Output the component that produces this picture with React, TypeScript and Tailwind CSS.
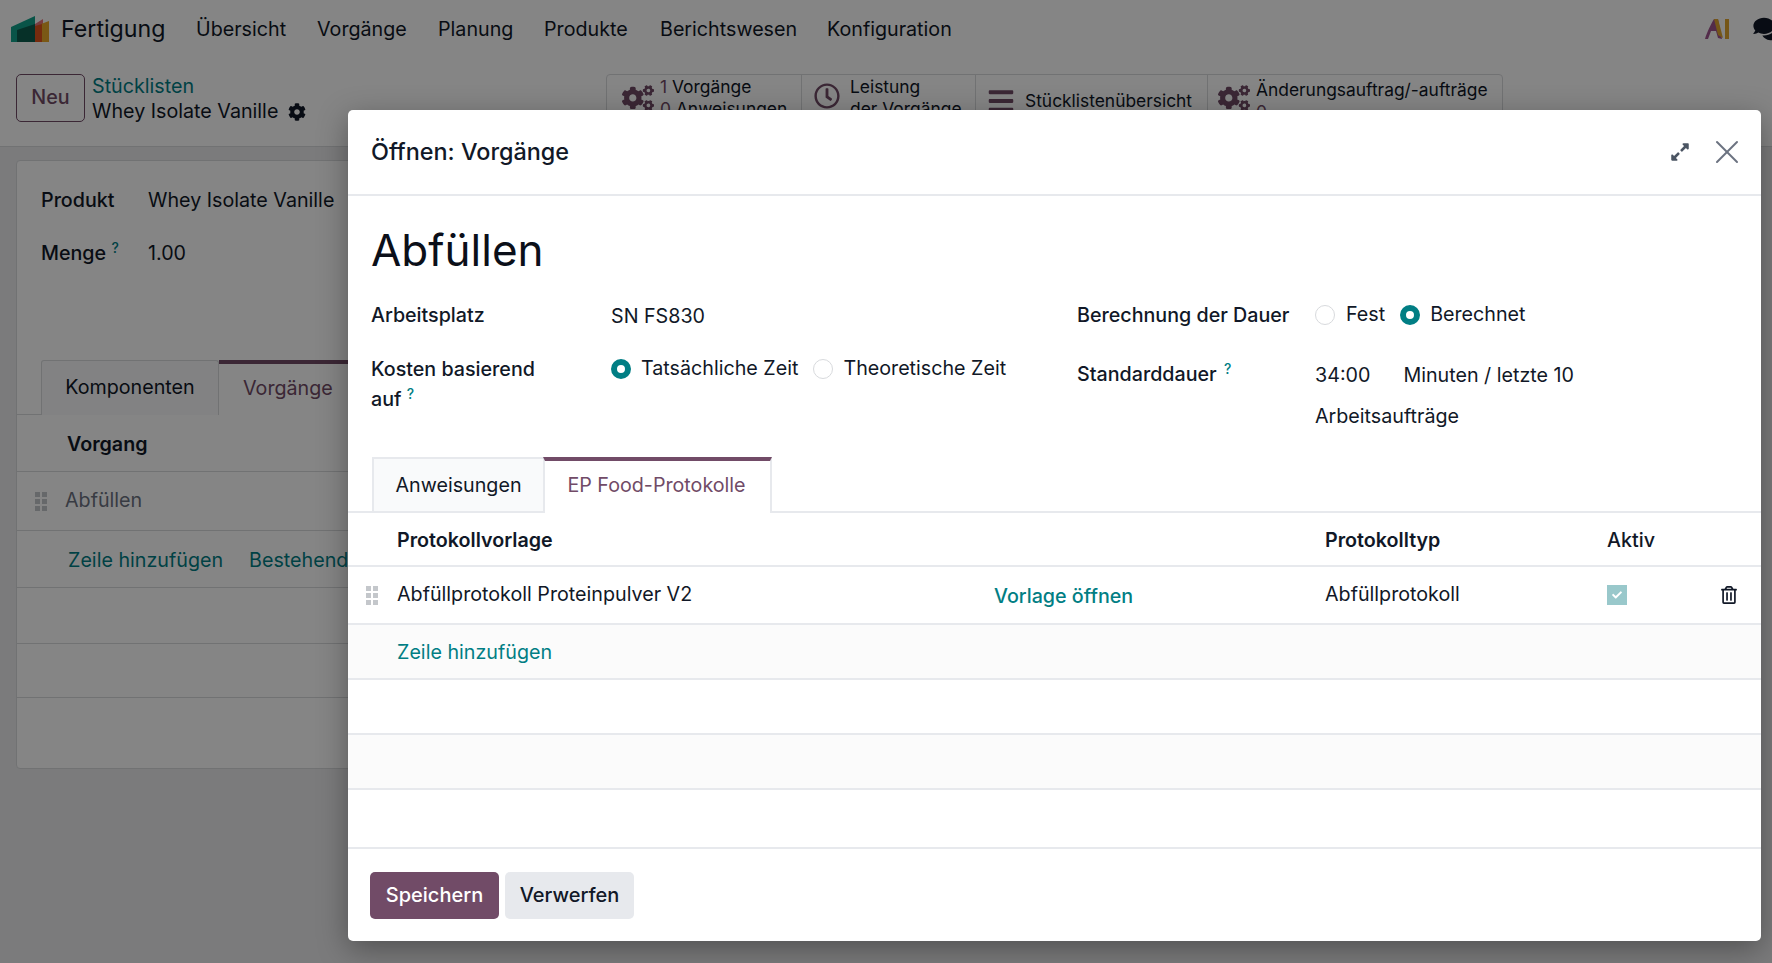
import { FaBars, FaCog, FaCogs, FaExpandAlt, FaRegClock, FaRegTrashAlt, FaComments, FaCheck } from 'react-icons/fa'
import { X } from 'lucide-react'

const font = { fontFamily: 'Inter, "Liberation Sans", sans-serif' }

const menu = [
  { label: 'Übersicht', width: 'w-[121px]' },
  { label: 'Vorgänge', width: 'w-[121px]' },
  { label: 'Planung', width: 'w-[106px]' },
  { label: 'Produkte', width: 'w-[116px]' },
  { label: 'Berichtswesen', width: 'w-[167px]' },
  { label: 'Konfiguration', width: 'w-[140px]' },
]

function Logo() {
  return (
    <svg width="38" height="27" viewBox="0 0 38 27" className="shrink-0">
      <path d="M24 8 L32 3 L32 26 L24 26 Z" fill="#e8737c" />
      <path d="M30 8 L38 5 L38 26 L30 26 Z" fill="#eaa92a" />
      <path d="M24 10 L31 8 L31 26 L24 26 Z" fill="#e2541c" />
      <path d="M0 11 L24 0 L24 26 L0 26 Z" fill="#12a28a" />
      <path d="M6 14 L24 8 L24 26 L6 26 Z" fill="#0c5c4e" />
    </svg>
  )
}

function AiLogo() {
  return (
    <svg width="26" height="22" viewBox="0 0 26 22">
      <path d="M1 21 C3 14 7 6 10 1 L14 1 L18 21 L14 20 L12 13 L7 13 L4 21 Z" fill="#a0558f" />
      <path d="M10 1 L14 1 L19 20 L14 17 Z" fill="#e0a62e" />
      <rect x="21" y="1" width="4" height="20" fill="#e0a62e" />
    </svg>
  )
}

function Help({ className }: { className?: string }) {
  return <sup className={`text-[14px] font-medium text-[#017e84] ${className ?? ''}`}>?</sup>
}

function Radio({ checked }: { checked?: boolean }) {
  return (
    <span
      className={`inline-block h-[20px] w-[20px] shrink-0 rounded-full ${
        checked ? 'border-[6px] border-[#017e84] bg-white' : 'border border-[#d8dadd] bg-white'
      }`}
    />
  )
}

function Handle() {
  return (
    <span className="inline-grid w-[12px] grid-cols-2 gap-x-[2px] gap-y-[2px] align-middle">
      {[0, 1, 2, 3, 4, 5].map((i) => (
        <span key={i} className="h-[5px] w-[5px] bg-[#c4c7cb]" />
      ))}
    </span>
  )
}

function BackgroundPage() {
  return (
    <div className="flex h-[963px] flex-col bg-[#ececed] text-[#111827]">
      {/* Navbar */}
      <nav className="flex h-[58px] items-center bg-white pl-[11px] text-[19.7px]">
        <Logo />
        <span className="ml-[12px] mr-[31px] w-[104px] shrink-0 text-[23.2px]">Fertigung</span>
        {menu.map((m) => (
          <span key={m.label} className={`${m.width} shrink-0 pt-[2px]`}>
            {m.label}
          </span>
        ))}
        <div className="ml-auto flex items-center gap-[23px]">
          <AiLogo />
          <FaComments className="mr-[-11px] h-[26px] w-[30px] text-[#111827]" />
        </div>
      </nav>

      {/* Control panel */}
      <div className="flex h-[89px] border-b border-[#d8dadd] bg-white pl-[16px] pt-[16px]">
        <button className="h-[48px] w-[69px] rounded-[5px] border border-[#714b67] text-[19.7px] font-medium text-[#714b67]">
          Neu
        </button>
        <div className="ml-[7px] flex w-[514px] flex-col text-[19.7px] leading-[25px]">
          <span className="text-[#017e84]">Stücklisten</span>
          <span className="flex items-center gap-[10px]">
            Whey Isolate Vanille <FaCog className="h-[18px] w-[18px]" />
          </span>
        </div>
        <div className="flex h-[48px] rounded-t-[4px] border border-[#d8dadd] text-[17.4px] leading-[22px]">
          <div className="flex w-[195px] gap-[6px] border-r border-[#d8dadd] pl-[15px] pt-[1px]">
            <FaCogs className="mt-[6px] h-[32px] w-[32px] text-[#714b67]" />
            <span>
              <span className="text-[#714b67]">1</span> Vorgänge
              <br />
              <span className="text-[#714b67]">0</span> Anweisungen
            </span>
          </div>
          <div className="flex w-[174px] gap-[10px] border-r border-[#d8dadd] pl-[12px] pt-[1px]">
            <FaRegClock className="mt-[7px] h-[26px] w-[26px] text-[#714b67]" />
            <span>
              Leistung
              <br />
              der Vorgänge
            </span>
          </div>
          <div className="flex w-[232px] items-center gap-[10px] border-r border-[#d8dadd] pl-[11px] pt-[6px]">
            <FaBars className="h-[28px] w-[28px] text-[#714b67]" />
            Stücklistenübersicht
          </div>
          <div className="flex w-[294px] gap-[6px] pl-[10px] pt-[4px]">
            <FaCogs className="mt-[3px] h-[32px] w-[32px] text-[#714b67]" />
            <span>
              Änderungsauftrag/-aufträge
              <br />
              <span className="text-[#714b67]">0</span>
            </span>
          </div>
        </div>
      </div>

      {/* Form sheet */}
      <div className="mx-[16px] mt-[13px] h-[609px] rounded-[4px] border border-[#d8dadd] bg-white text-[19.7px]">
        <div className="grid grid-cols-[107px_auto] content-start gap-y-[23px] pl-[24px] pt-[25px]">
          <span className="font-medium">Produkt</span>
          <span>Whey Isolate Vanille</span>
          <span className="font-medium">
            Menge <Help />
          </span>
          <span>1.00</span>
        </div>
        <div className="mt-[92px] flex h-[55px] border-b border-[#d8dadd] pl-[24px]">
          <div className="flex h-[55px] w-[178px] items-center justify-center rounded-t-[3px] border-x border-t border-[#d8dadd] bg-[#f9fafb]">
            Komponenten
          </div>
          <div className="flex h-[56px] w-[200px] items-center border-t-[4px] border-[#714b67] bg-white pb-[2px] pl-[24px] text-[#714b67]">
            <span>Vorgänge</span>
          </div>
        </div>
        <div className="flex h-[57px] items-center border-b border-[#d8dadd] pl-[50px] pt-[3px] font-semibold">
          <span>Vorgang</span>
        </div>
        <div className="flex h-[59px] items-center gap-[18px] border-b border-[#d8dadd] pl-[18px] text-[#6b7280]">
          <Handle />
          <span>Abfüllen</span>
        </div>
        <div className="flex h-[57px] items-center gap-[26px] border-b border-[#d8dadd] pl-[51px] pt-[4px] text-[#017e84]">
          <span>Zeile hinzufügen</span>
          <span>Bestehenden Inhalt hinzufügen</span>
        </div>
        <div className="h-[56px] border-b border-[#d8dadd]" />
        <div className="h-[54px] border-b border-[#d8dadd]" />
      </div>
    </div>
  )
}

function ProtocolTable() {
  const cols = 'grid grid-cols-[49px_597px_331px_282px_1fr] items-center'
  return (
    <div className="text-[19.7px]">
      <div className={`${cols} h-[54px] border-b-2 border-[#e7e9ed] pt-[3px] font-semibold`}>
        <span />
        <span className="col-span-2">Protokollvorlage</span>
        <span>Protokolltyp</span>
        <span className="font-medium">Aktiv</span>
      </div>
      <div className={`${cols} h-[58px] border-b-2 border-[#e7e9ed]`}>
        <span className="pl-[18px]">
          <Handle />
        </span>
        <span>Abfüllprotokoll Proteinpulver V2</span>
        <span className="pt-[3px] font-medium text-[#017e84]">Vorlage öffnen</span>
        <span>Abfüllprotokoll</span>
        <span className="flex items-center">
          <span className="flex h-[20px] w-[20px] items-center justify-center bg-[#99c8cb]">
            <FaCheck className="h-[10px] w-[10px] text-white" />
          </span>
          <FaRegTrashAlt className="ml-[94px] h-[18px] w-[16px]" />
        </span>
      </div>
      <div className={`${cols} h-[55px] border-b-2 border-[#e7e9ed] bg-[#fbfbfb] pt-[3px] text-[#017e84]`}>
        <span />
        <span>Zeile hinzufügen</span>
      </div>
      <div className="h-[55px] border-b-2 border-[#e7e9ed]" />
      <div className="h-[55px] border-b-2 border-[#e7e9ed] bg-[#fbfbfb]" />
      <div className="h-[59px] border-b-2 border-[#e7e9ed]" />
    </div>
  )
}

function Dialog() {
  return (
    <div className="absolute left-[348px] top-[110px] flex h-[831px] w-[1413px] flex-col rounded-[5px] bg-white text-[#111827] shadow-[0_8px_30px_rgba(0,0,0,0.35)]">
      <header className="flex h-[86px] shrink-0 items-center border-b-2 border-[#e7e9ed] pl-[23px] pr-[14px]">
        <h4 className="text-[23.4px] font-medium">Öffnen: Vorgänge</h4>
        <FaExpandAlt className="ml-auto mr-[17px] h-[20px] w-[20px] text-[#4b5563]" />
        <X className="h-[40px] w-[40px] text-[#6b7280]" strokeWidth={1.2} />
      </header>

      <div className="flex-1">
        <h1 className="ml-[23px] mt-[27px] h-[79px] text-[44px] font-normal leading-[54px] text-[#0b0f19]">Abfüllen</h1>
        <div className="grid grid-cols-[706px_1fr] pl-[23px] text-[19.7px]">
          <div className="grid grid-cols-[240px_1fr] content-start gap-y-[24px]">
            <span className="font-medium leading-[26px]">Arbeitsplatz</span>
            <span className="leading-[28px]">SN FS830</span>
            <span className="font-medium leading-[30px]">
              Kosten basierend
              <br />
              auf <Help />
            </span>
            <div className="mt-[2px] flex h-[26px] items-center">
              <Radio checked />
              <span className="ml-[10px] mr-[15px]">Tatsächliche Zeit</span>
              <Radio />
              <span className="ml-[10px]">Theoretische Zeit</span>
            </div>
          </div>
          <div className="grid grid-cols-[238px_1fr] content-start gap-y-[24px]">
            <span className="font-medium leading-[26px]">Berechnung der Dauer</span>
            <div className="flex h-[26px] items-center">
              <Radio />
              <span className="ml-[11px] mr-[15px]">Fest</span>
              <Radio checked />
              <span className="ml-[10px]">Berechnet</span>
            </div>
            <span className="pt-[9px] font-medium leading-[26px]">
              Standarddauer <Help className="ml-[2px]" />
            </span>
            <div className="pt-[3px] leading-[41px]">
              <span className="mr-[33px]">34:00</span>
              Minuten / letzte 10
              <br />
              Arbeitsaufträge
            </div>
          </div>
        </div>

        {/* Tabs */}
        <div className="mt-[20px] flex h-[56px] border-b-2 border-[#e7e9ed] pl-[24px] text-[19.7px]">
          <div className="flex h-[54px] w-[171px] items-center justify-center border-l-2 border-t-2 border-[#e7e9ed] bg-[#f9fafb] pt-[2px]">
            Anweisungen
          </div>
          <div className="flex h-[56px] w-[229px] items-center justify-center border-x-2 border-t-[4px] border-x-[#e7e9ed] border-t-[#714b67] bg-white pb-[2px] pr-[2px] text-[#714b67]">
            EP Food-Protokolle
          </div>
        </div>
        <ProtocolTable />
      </div>

      <footer className="flex h-[92px] shrink-0 items-center gap-[6px] pl-[22px] text-[20px] font-medium">
        <button className="h-[47px] w-[129px] rounded-[5px] bg-[#714b67] text-white">Speichern</button>
        <button className="h-[47px] w-[129px] rounded-[5px] bg-[#e7e9ed]">Verwerfen</button>
      </footer>
    </div>
  )
}

export default function App() {
  return (
    <div className="relative h-[963px] w-[1772px] overflow-hidden" style={font}>
      <BackgroundPage />
      <div className="absolute inset-0 bg-black/[.48]" />
      <Dialog />
    </div>
  )
}
